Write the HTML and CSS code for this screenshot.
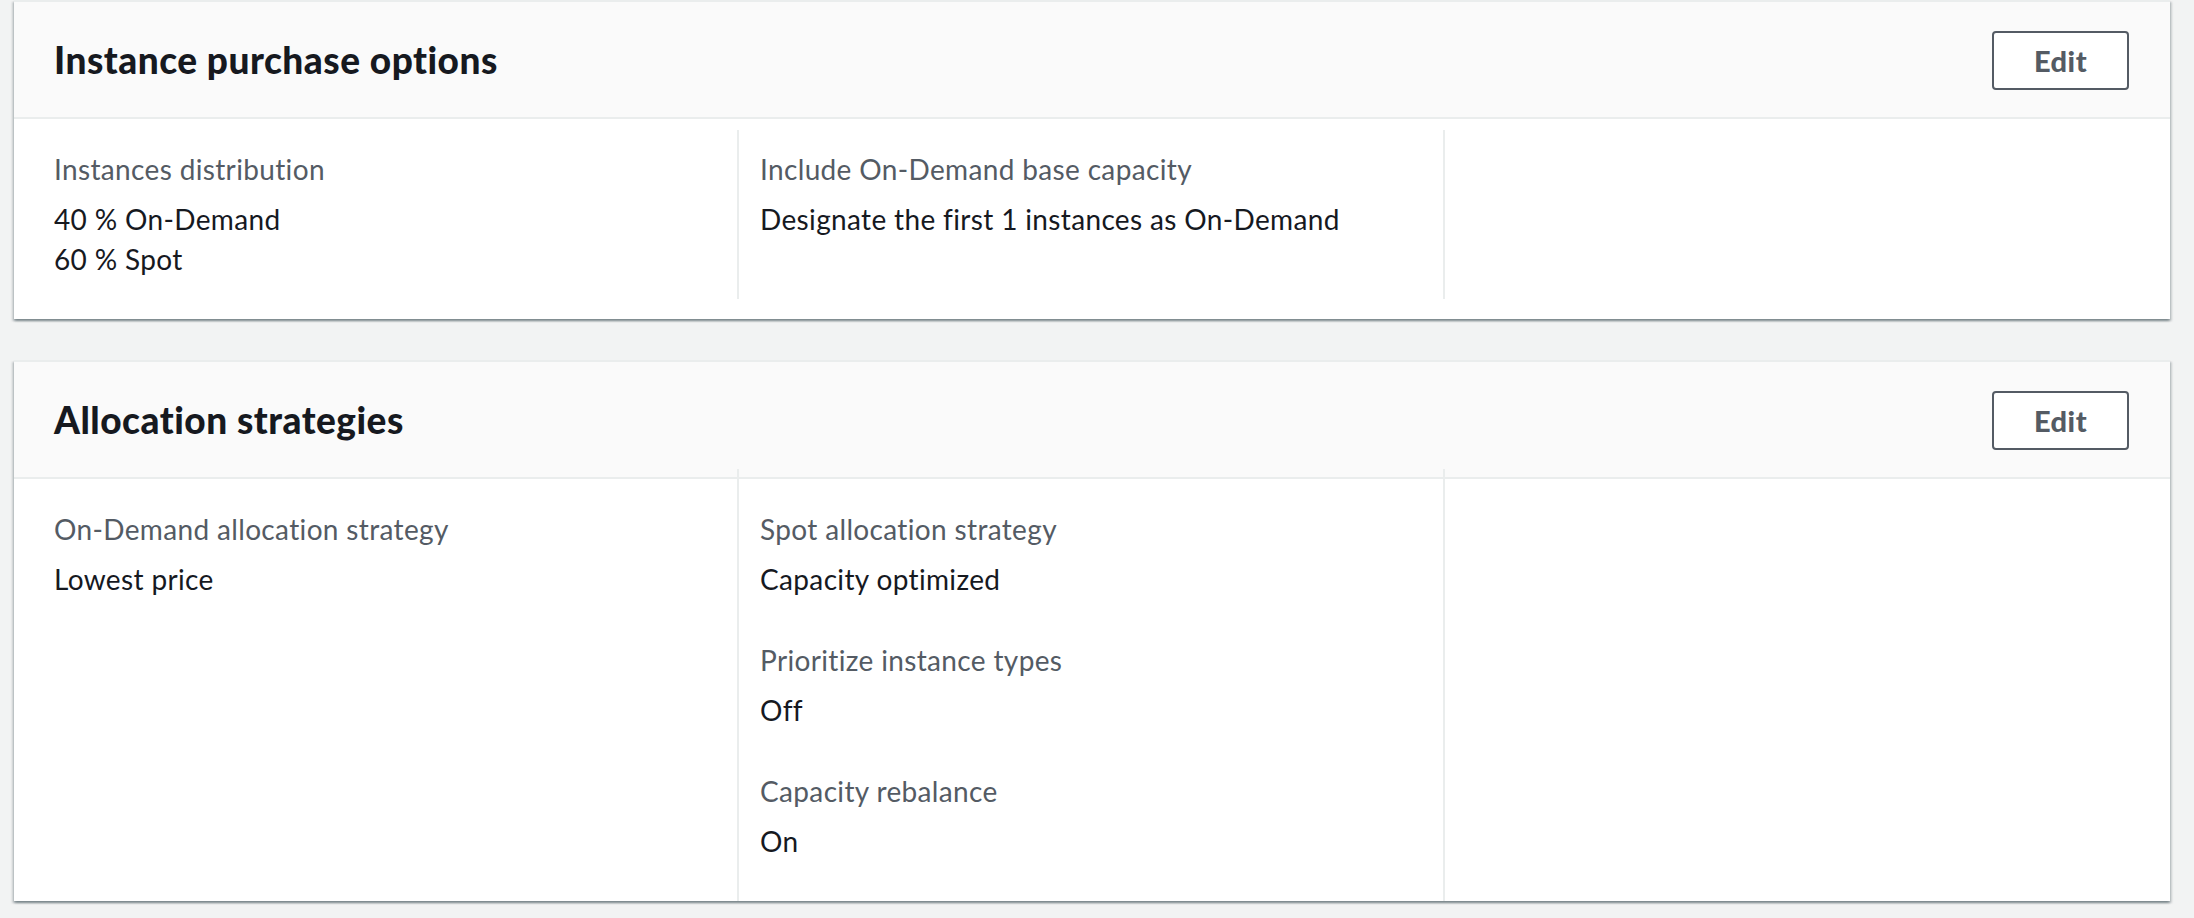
FILE: index.html
```html
<!DOCTYPE html>
<html lang="en">
<head>
<meta charset="utf-8">
<title>Instance purchase options</title>
<link rel="stylesheet" href="styles.css">
</head>
<body>
<div class="page">
  <section class="card">
    <header class="card-header">
      <h2 class="card-title">Instance purchase options</h2>
      <button class="btn">Edit</button>
    </header>
    <div class="card-body">
      <div class="grid">
        <div class="col">
          <div class="item">
            <div class="label">Instances distribution</div>
            <div class="value">40 % On-Demand<br>60 % Spot</div>
          </div>
        </div>
        <div class="col">
          <div class="item">
            <div class="label">Include On-Demand base capacity</div>
            <div class="value">Designate the first 1 instances as On-Demand</div>
          </div>
        </div>
        <div class="col"></div>
      </div>
    </div>
  </section>

  <section class="card card-second">
    <header class="card-header">
      <h2 class="card-title">Allocation strategies</h2>
      <button class="btn">Edit</button>
    </header>
    <div class="card-body">
      <div class="grid">
        <div class="col">
          <div class="item">
            <div class="label">On-Demand allocation strategy</div>
            <div class="value">Lowest price</div>
          </div>
        </div>
        <div class="col">
          <div class="item">
            <div class="label">Spot allocation strategy</div>
            <div class="value">Capacity optimized</div>
          </div>
          <div class="item">
            <div class="label">Prioritize instance types</div>
            <div class="value">Off</div>
          </div>
          <div class="item">
            <div class="label">Capacity rebalance</div>
            <div class="value">On</div>
          </div>
        </div>
        <div class="col"></div>
      </div>
    </div>
  </section>
</div>
</body>
</html>
```

FILE: styles.css
```css
* { box-sizing: border-box; }

html, body {
  margin: 0;
  padding: 0;
  background: #f2f3f3;
}

body {
  font-family: Lato, "Liberation Sans", Arial, sans-serif;
  color: #16191f;
  width: 2194px;
  height: 918px;
  overflow: hidden;
}

.page {
  padding: 0 24px 0 14px;
}

.card {
  background: #ffffff;
  border-top: 2px solid #eaeded;
  box-shadow: 0 2px 2px 0 rgba(0, 28, 36, 0.3),
              2px 2px 2px 0 rgba(0, 28, 36, 0.15),
              -2px 2px 2px 0 rgba(0, 28, 36, 0.15);
}

.card-second {
  margin-top: 41px;
}

.card-header {
  height: 117px;
  background: #fafafa;
  border-bottom: 2px solid #eaeded;
  display: flex;
  align-items: center;
  justify-content: space-between;
  padding: 0 41px 0 40px;
}

.card-title {
  margin: 0;
  font-size: 37px;
  line-height: 44px;
  font-weight: 900;
  letter-spacing: 0.5px;
  color: #16191f;
}

.btn {
  font-family: inherit;
  font-size: 29px;
  font-weight: 900;
  letter-spacing: 0.5px;
  color: #545b64;
  background: #ffffff;
  border: 2px solid #545b64;
  border-radius: 4px;
  width: 137px;
  height: 59px;
  padding: 0;
  margin-top: 1px;
}

.card-body {
  padding: 11px 21px 20px 17px;
}

.card-second .card-body {
  padding-top: 0;
  padding-bottom: 0;
}

.grid {
  display: grid;
  grid-template-columns: 1fr 1fr 1fr;
}

.card-second .grid {
  margin-top: -10px;
  position: relative;
}

.col {
  padding: 19px 21px 20px 23px;
}

.col + .col {
  border-left: 2px solid #eaeded;
  padding-left: 21px;
}

.card-second .col {
  padding-top: 40px;
  padding-bottom: 40px;
}

.item + .item {
  margin-top: 41px;
}

.label {
  font-size: 28px;
  line-height: 40px;
  letter-spacing: 0.35px;
  color: #545b64;
  margin-bottom: 10px;
}

.value {
  font-size: 28px;
  line-height: 40px;
  letter-spacing: 0.35px;
  color: #16191f;
}
```
